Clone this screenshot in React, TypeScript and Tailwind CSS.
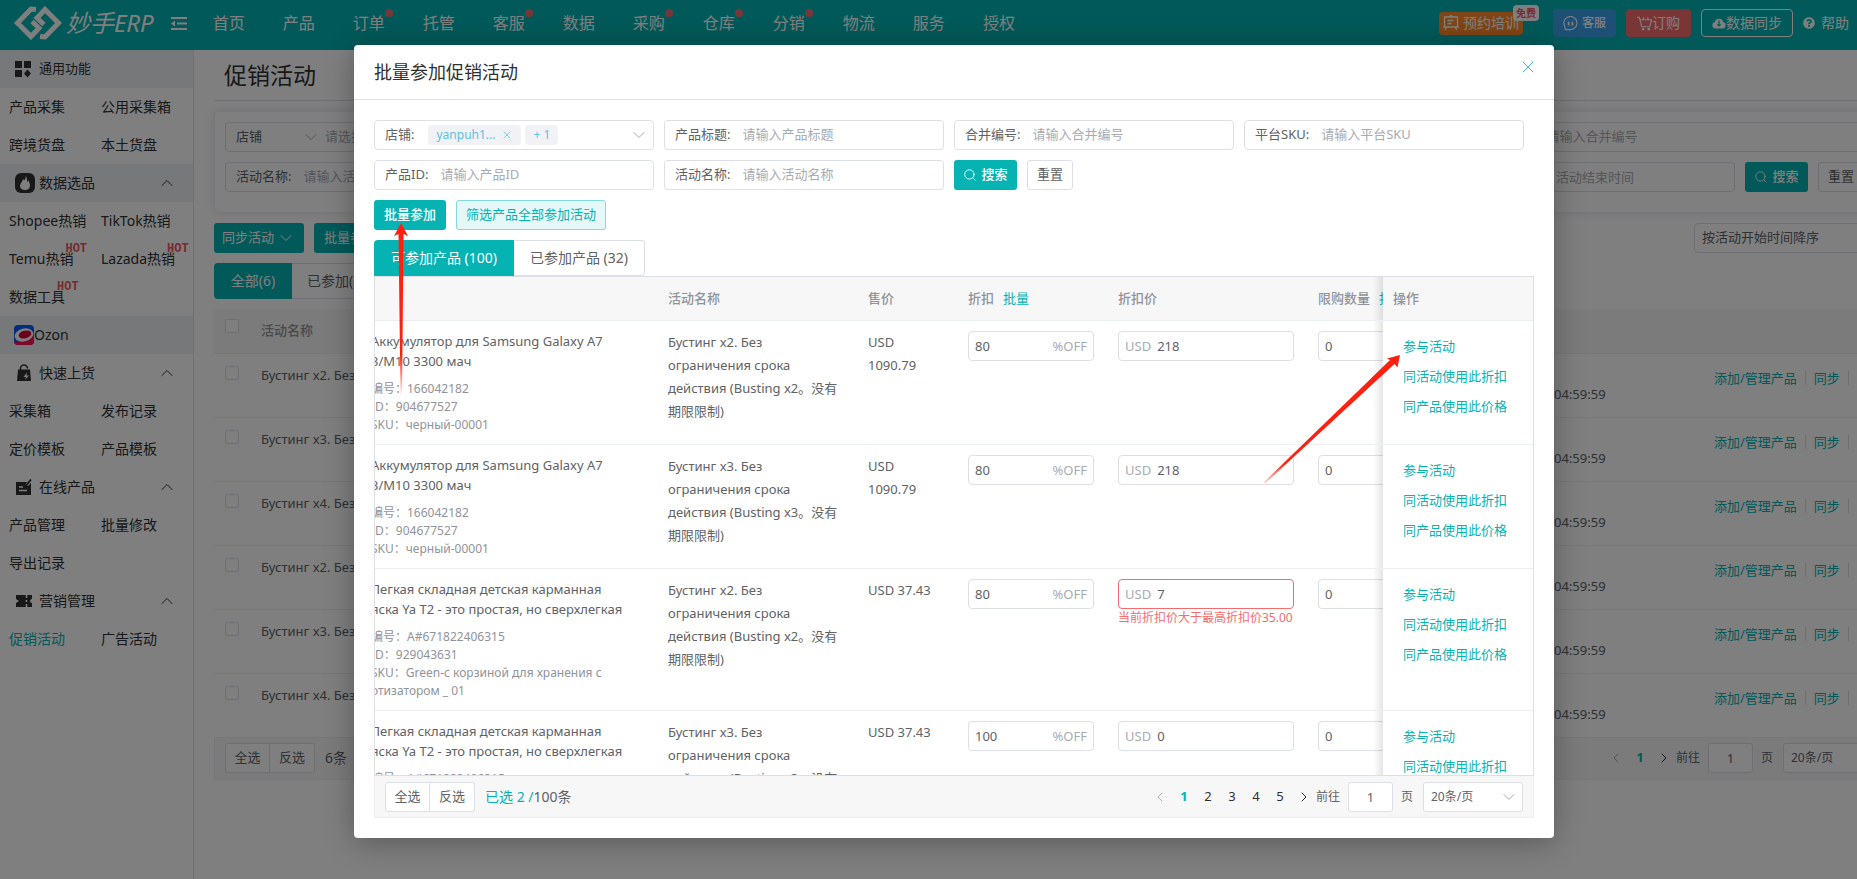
import { useId } from 'react';
import type { ReactNode } from 'react';
import { ChevronDown, ChevronLeft, ChevronRight, ChevronUp, Search, X } from 'lucide-react';
import { FaQuestionCircle } from 'react-icons/fa';

const NAV = [
  { label: '首页' },
  { label: '产品' },
  { label: '订单', dot: true },
  { label: '托管' },
  { label: '客服', dot: true },
  { label: '数据' },
  { label: '采购', dot: true },
  { label: '仓库', dot: true },
  { label: '分销', dot: true },
  { label: '物流' },
  { label: '服务' },
  { label: '授权' },
];

const CAMPAIGNS = ['x2', 'x3', 'x4', 'x2', 'x3', 'x4'];

const PHONE = ['Аккумулятор для Samsung Galaxy A7', '3/M10 3300 мач'];
const STROLLER = ['Легкая складная детская карманная', 'яска Ya T2 - это простая, но сверхлегкая'];

const PRODUCTS = [
  {
    title: PHONE,
    meta: ['编号：166042182', 'ID：904677527', 'SKU：черный-00001'],
    boost: 'x2',
    price: 'USD 1090.79',
    off: '80',
    final: '218',
  },
  {
    title: PHONE,
    meta: ['编号：166042182', 'ID：904677527', 'SKU：черный-00001'],
    boost: 'x3',
    price: 'USD 1090.79',
    off: '80',
    final: '218',
  },
  {
    title: STROLLER,
    meta: ['编号：A#671822406315', 'ID：929043631', 'SKU：Green-с корзиной для хранения с', 'отизатором _ 01'],
    boost: 'x2',
    price: 'USD 37.43',
    off: '80',
    final: '7',
    error: '当前折扣价大于最高折扣价35.00',
  },
  {
    title: STROLLER,
    meta: ['编号：A#671822406315', 'ID：929043631', 'SKU：Green-с корзиной для хранения с', 'отизатором _ 01'],
    boost: 'x3',
    price: 'USD 37.43',
    off: '100',
    final: '0',
  },
];

function Logo() {
  return (
    <svg viewBox="0 0 48 34" className="h-[34px] w-12" fill="none" stroke="white" strokeWidth="5">
      <path d="M22 3.5 L17 3 L3.5 17 L17 30.5 L25 22 L18 15.5" />
      <path d="M26 30.5 L31 31 L44.500 17 L31 3.500 L23 12 L30 18.500" />
    </svg>
  );
}

function MenuIcon() {
  return (
    <svg viewBox="0 0 16 13" className="h-[13px] w-4" fill="white">
      <path d="M0 0h16v2H0zM6 5.500h10v2H6zM0 11h16v2H0zM0 6.500l4-3v6z" />
    </svg>
  );
}

function GridIcon() {
  return (
    <svg viewBox="0 0 18 18" className="size-[18px]" fill="#303133">
      <path d="M0 1h7v7H0zM9 1h7v7H9zM0 10h7v7H0zM12.500 9.500l3.500 4-3.500 4-3.500-4z" />
    </svg>
  );
}

function FireIcon() {
  return (
    <svg viewBox="0 0 20 20" className="size-5">
      <rect width="20" height="20" rx="6" fill="#303133" />
      <path d="M10.500 3c.5 2-.5 3.500-1.500 4.500-.3-.8-.6-1.200-1-1.500 0 2-3 4-3 7 0 2.500 2.200 4 5 4s5-1.500 5-4.500c0-2.500-1.200-4-2-5.500 0 1-.4 1.600-1 2C12.300 6.500 12 4.500 10.500 3z" fill="white" />
    </svg>
  );
}

function OzonIcon() {
  return (
    <svg viewBox="0 0 20 20" className="size-5">
      <defs>
        <clipPath id="ozon-clip">
          <rect width="20" height="20" rx="4" />
        </clipPath>
      </defs>
      <g clipPath="url(#ozon-clip)">
        <rect width="20" height="20" fill="#005bff" />
        <path d="M0 20 L0 17 Q12 17 20 8 V20z" fill="#f91155" />
        <ellipse cx="10" cy="10" rx="9.500" ry="6.500" fill="white" transform="rotate(-14 10 10)" />
        <ellipse cx="11" cy="9.500" rx="6.500" ry="3.800" fill="#d6003f" transform="rotate(-14 11 9.500)" />
      </g>
    </svg>
  );
}

function BagIcon() {
  return (
    <svg viewBox="0 0 18 18" className="size-[18px]">
      <path d="M5.500 6V4.500a3.500 3.500 0 0 1 7 0" fill="none" stroke="#303133" strokeWidth="1.500" />
      <path d="M3 5.500h12l1 11.500H2z" fill="#303133" />
      <path d="M12 8.500l-3.500 4.500h2.500l-1 3 4-4.500h-2.500z" fill="white" />
    </svg>
  );
}

function EditIcon() {
  return (
    <svg viewBox="0 0 18 18" className="size-[18px]">
      <path d="M1 4h11l-2 4h3l3-3v12H1z" fill="#303133" />
      <path d="M4 9h4M4 12.500h8" stroke="white" strokeWidth="1.500" />
      <path d="M10.500 8.500l5.500-7" stroke="#303133" strokeWidth="2" />
    </svg>
  );
}

function TicketIcon() {
  return (
    <svg viewBox="0 0 18 18" className="size-[18px]">
      <path d="M1 3h16v4a2 2 0 0 0 0 4v4H1v-4l3-2-3-2z" fill="#303133" />
      <path d="M11.500 3v3M11.500 8v2M11.500 12v3" stroke="white" strokeWidth="1.500" />
    </svg>
  );
}

function TrainingIcon() {
  return (
    <svg viewBox="0 0 16 16" className="size-4" fill="none" stroke="white" strokeWidth="1.300">
      <path d="M0 12h16M1.500 12v-10h13v10M6 2l2-1.500L10 2M4.500 5.500h6M4.500 8.500h4M4 12L2 15M12 12l2 3" />
    </svg>
  );
}

function HeadsetIcon() {
  return (
    <svg viewBox="0 0 16 16" className="size-[15px]" fill="none" stroke="white" strokeWidth="1.200">
      <path d="M2.500 14.500h5.500a7 7 0 1 0-6-3.200z" />
      <path d="M6 6v4M10 6v4" strokeWidth="1.800" />
    </svg>
  );
}

function CartIcon() {
  return (
    <svg viewBox="0 0 16 16" className="size-[15px]" fill="none" stroke="white" strokeWidth="1.200">
      <path d="M0 1.500h2.500L5 11.500h8.500L15.500 4H3.200M6 4l1.500-2.500M12.500 4L11 1.500" />
      <circle cx="6.500" cy="14" r="0.800" />
      <circle cx="12.500" cy="14" r="0.800" />
    </svg>
  );
}

function CloudIcon() {
  return (
    <svg viewBox="0 0 14 12" className="h-3 w-[14px]">
      <path d="M3.500 11.500a3.300 3.300 0 0 1-.6-6.500 4.200 4.200 0 0 1 8.200 0 3.300 3.300 0 0 1-.6 6.500z" fill="white" />
      <path d="M7 3.500v5.500M5.300 7.300L7 9l1.700-1.700" fill="none" stroke="#05b3b3" strokeWidth="1.200" />
    </svg>
  );
}

function SideGroup({ icon, label, shaded, fold = true }: { icon: ReactNode; label: string; shaded?: boolean; fold?: boolean }) {
  return (
    <div className={`flex h-[38px] items-center pr-4 pl-[15px] ${shaded ? 'bg-[#eff1f5]' : ''}`}>
      <span className="flex w-6 items-center">{icon}</span>
      <span className={`flex-1 ${fold ? 'text-sm' : 'text-[13px]'}`}>{label}</span>
      {fold && <ChevronUp className="size-5" strokeWidth={1.2} />}
    </div>
  );
}

function SideRow({ items, active }: { items: [string, boolean?][]; active?: boolean }) {
  return (
    <div className="grid h-[38px] grid-cols-2 items-center pl-[9px]">
      {items.map(([label, hot], i) => (
        <a key={label} href="#" className={`text-sm ${active && i === 0 ? 'text-[#05b3b3]' : ''}`}>
          <span className="relative">
            {label}
            {hot && <span className="absolute -top-1.5 -right-6 w-8 font-['Liberation_Mono'] text-xs leading-3 font-bold text-[#f5565c]">HOT</span>}
          </span>
        </a>
      ))}
    </div>
  );
}

function Sidebar() {
  return (
    <aside className="w-[194px] shrink-0 border-r border-[#dcdfe6] text-[#303133]">
      <SideGroup icon={<GridIcon />} label="通用功能" shaded fold={false} />
      <SideRow items={[['产品采集'], ['公用采集箱']]} />
      <SideRow items={[['跨境货盘'], ['本土货盘']]} />
      <SideGroup icon={<FireIcon />} label="数据选品" shaded />
      <SideRow items={[['Shopee热销'], ['TikTok热销']]} />
      <SideRow items={[['Temu热销', true], ['Lazada热销', true]]} />
      <SideRow items={[['数据工具', true]]} />
      <div className="flex h-[38px] items-center bg-[#eff1f5] pl-[14px] text-sm">
        <OzonIcon />
        Ozon
      </div>
      <SideGroup icon={<BagIcon />} label="快速上货" />
      <SideRow items={[['采集箱'], ['发布记录']]} />
      <SideRow items={[['定价模板'], ['产品模板']]} />
      <SideGroup icon={<EditIcon />} label="在线产品" />
      <SideRow items={[['产品管理'], ['批量修改']]} />
      <SideRow items={[['导出记录']]} />
      <SideGroup icon={<TicketIcon />} label="营销管理" />
      <SideRow items={[['促销活动'], ['广告活动']]} active />
    </aside>
  );
}

function TopBar() {
  return (
    <header className="flex h-[50px] items-center bg-[#05b3b3] pr-[59px] pb-1 pl-[14px] text-white">
      <Logo />
      <span className="ml-1 text-2xl italic">妙手ERP</span>
      <button className="ml-[17px]" aria-label="收起菜单">
        <MenuIcon />
      </button>
      <nav className="ml-[26px] flex gap-[38px] text-base">
        {NAV.map((item) => (
          <a key={item.label} href="#" className="relative">
            {item.label}
            {item.dot && <span className="absolute -top-0.5 -right-2 size-2 rounded-full bg-[#f56c6c]" />}
          </a>
        ))}
      </nav>
      <div className="ml-auto flex items-center text-sm">
        <button className="relative mr-[30px] flex h-[23px] items-center gap-1 rounded-sm bg-[#ff8a2b] px-1">
          <TrainingIcon />
          预约培训
          <span className="absolute -top-[7px] -right-4 rounded bg-white px-[3px] text-[10px] leading-4 font-bold text-[#f5565c]">免费</span>
        </button>
        <button className="mr-2.5 flex h-7 items-center gap-1 rounded bg-[#3ba0e9] px-2.5 text-xs font-medium">
          <HeadsetIcon />
          客服
        </button>
        <button className="mr-2.5 flex h-7 items-center rounded bg-[#f56c6c] px-[11px]">
          <CartIcon />
          订购
        </button>
        <button className="mr-2.5 flex h-7 items-center rounded border border-white px-2.5">
          <CloudIcon />
          数据同步
        </button>
        <a href="#" className="flex items-center gap-1.5">
          <FaQuestionCircle className="size-3" />
          帮助
        </a>
      </div>
    </header>
  );
}

function Field({ label, placeholder, className = '' }: { label: string; placeholder: string; className?: string }) {
  const id = useId();
  return (
    <div className={`flex h-[30px] items-center rounded border border-[#dcdfe6] px-2.5 text-[13px] ${className}`}>
      <label htmlFor={id} className="shrink-0">
        {label}:
      </label>
      <input id={id} placeholder={placeholder} className="ml-3 w-full min-w-0 outline-none placeholder:text-[#a8abb2]" />
    </div>
  );
}

function SearchButtons() {
  return (
    <>
      <button className="flex h-[30px] w-[63px] items-center justify-center gap-1 rounded-[3px] bg-[#05b3b3] text-[13px] font-medium text-white">
        <Search className="size-[14px]" strokeWidth={1.5} />
        搜索
      </button>
      <button className="h-[30px] w-[46px] rounded-[3px] border border-[#dcdfe6] text-[13px]">重置</button>
    </>
  );
}

function Pager({ pages, total }: { pages: number[]; total: ReactNode }) {
  return (
    <div className="flex h-[42px] items-center border border-t-0 border-[#ebeef5] bg-[#f7f7f8] px-2.5 text-[13px]">
      <button className="h-[30px] w-[45px] rounded-l-[3px] border border-[#dcdfe6] bg-white">全选</button>
      <button className="h-[30px] w-[45px] rounded-r-[3px] border border-l-0 border-[#dcdfe6] bg-white">反选</button>
      <span className="ml-2.5 text-sm">{total}</span>
      <div className="ml-auto flex items-center text-[#303133]">
        <button className="flex w-6 justify-center" aria-label="上一页">
          <ChevronLeft className="size-4 text-[#a8abb2]" strokeWidth={1.5} />
        </button>
        {pages.map((n) => (
          <button key={n} className={`w-6 text-center ${n === 1 ? 'font-bold text-[#05b3b3]' : ''}`}>
            {n}
          </button>
        ))}
        <button className="flex w-6 justify-center" aria-label="下一页">
          <ChevronRight className="size-4" strokeWidth={1.5} />
        </button>
        <label className="flex items-center gap-2 text-xs text-[#606266]">
          前往
          <input defaultValue="1" className="h-[30px] w-[45px] rounded-[3px] border border-[#dcdfe6] bg-white text-center text-[13px]" />
          页
        </label>
        <span className="relative ml-2.5">
          <select aria-label="每页条数" className="h-[30px] w-[100px] appearance-none rounded-[3px] border border-[#dcdfe6] bg-white pl-[7px] text-xs text-[#606266]">
            <option>20条/页</option>
          </select>
          <ChevronDown className="pointer-events-none absolute top-[5px] right-1 size-5 text-[#a8abb2]" strokeWidth={1.2} />
        </span>
      </div>
    </div>
  );
}

function CampaignPage() {
  return (
    <main className="min-w-0 flex-1 pr-[14px] pl-5 text-[13px]">
      <h1 className="h-[51px] border-b border-[#dcdfe6] pl-2.5 text-[23px] leading-[50px] text-[#303133]">促销活动</h1>
      <section className="mt-2.5 space-y-2.5 rounded border border-[#ebeef5] p-2.5 pb-5 shadow-[0_0_12px_rgba(0,0,0,0.1)]">
        <div className="flex justify-between">
          <div className="flex h-[30px] w-[300px] items-center rounded border border-[#dcdfe6] px-2.5">
            <label htmlFor="shop" className="w-[65px]">
              店铺
            </label>
            <ChevronDown className="mr-1 size-5 text-[#a8abb2]" strokeWidth={1.2} />
            <input id="shop" placeholder="请选择" className="min-w-0 flex-1 placeholder:text-[#a8abb2]" />
          </div>
          <Field label="合并编号" placeholder="请输入合并编号" className="w-[415px]" />
        </div>
        <div className="flex gap-2.5">
          <Field label="活动名称" placeholder="请输入活动名称" className="w-[300px]" />
          <input
            aria-label="活动结束时间"
            placeholder="活动结束时间"
            className="ml-auto h-[30px] w-[300px] rounded border border-[#dcdfe6] pl-[120px] placeholder:text-[#a8abb2]"
          />
          <SearchButtons />
          <span className="w-[9px]" />
        </div>
      </section>
      <div className="mt-2.5 flex gap-2.5">
        <button className="flex h-[30px] w-[90px] items-center justify-center gap-0.5 rounded-[3px] bg-[#05b3b3] text-white">
          同步活动
          <ChevronDown className="size-5" strokeWidth={1.2} />
        </button>
        <button className="h-[30px] w-[72px] rounded-[3px] bg-[#05b3b3] text-white">批量参加</button>
        <select aria-label="排序" className="ml-auto h-[30px] w-[200px] appearance-none rounded border border-[#dcdfe6] pl-[7px]">
          <option>按活动开始时间降序</option>
        </select>
      </div>
      <div className="mt-2.5 flex text-sm">
        <button className="h-9 w-[78px] rounded-l bg-[#05b3b3] text-white">全部(6)</button>
        <button className="h-9 w-[100px] rounded-r border border-l-0 border-[#dcdfe6] pl-[15px] text-left">已参加(6)</button>
      </div>
      <table className="mt-2.5 w-full table-fixed">
        <colgroup>
          <col className="w-[37px]" />
          <col />
          <col className="w-40" />
          <col className="w-[190px]" />
        </colgroup>
        <thead className="bg-[#f7f7f8] text-left text-[#909399]">
          <tr className="h-11 border-b border-[#ebeef5]">
            <th className="pt-2.5 pl-[11px] align-top">
              <input type="checkbox" aria-label="全选活动" className="block size-[14px] appearance-none rounded-xs border border-[#dcdfe6] bg-white" />
            </th>
            <th className="pl-2.5 font-medium">活动名称</th>
            <th />
            <th />
          </tr>
        </thead>
        <tbody>
          {CAMPAIGNS.map((boost, i) => (
            <tr key={i} className="h-16 border-b border-[#ebeef5] align-top">
              <td className="pt-3 pl-[11px]">
                <input type="checkbox" aria-label={`Бустинг ${boost}`} className="block size-[14px] appearance-none rounded-xs border border-[#dcdfe6] bg-white" />
              </td>
              <td className="pt-2.5 pl-2.5 leading-[23px]">Бустинг {boost}. Без</td>
              <td className="pt-[30px] pl-2.5 leading-5">04:59:59</td>
              <td className="pt-3.5 pl-2.5 leading-5">
                <span className="flex items-center text-[#05b3b3]">
                  <a href="#">添加/管理产品</a>
                  <span className="mx-2 h-3.5 w-px bg-[#dcdfe6]" />
                  <a href="#">同步</a>
                  <span className="mx-2 h-3.5 w-px bg-[#dcdfe6]" />
                </span>
              </td>
            </tr>
          ))}
        </tbody>
      </table>
      <Pager pages={[1]} total="6条" />
    </main>
  );
}

function ProductTable() {
  const fixed =
    "sticky right-0 before:absolute before:inset-y-0 before:-left-2.5 before:w-2.5 before:bg-linear-to-r before:from-transparent before:to-black/10 before:content-['']";
  return (
    <div className="h-[500px] overflow-hidden border border-[#dcdfe6]">
      <table className="-ml-1 w-[1237px] table-fixed border-separate border-spacing-0">
        <colgroup>
          <col className="w-[287px]" />
          <col className="w-[200px]" />
          <col className="w-[100px]" />
          <col className="w-[150px]" />
          <col className="w-[200px]" />
          <col className="w-[150px]" />
          <col className="w-[150px]" />
        </colgroup>
        <thead>
          <tr className="h-11 text-left text-[#909399] *:border-b *:border-[#ebeef5] *:bg-[#f7f7f8] *:px-2.5 *:font-medium">
            <th />
            <th>活动名称</th>
            <th>售价</th>
            <th>
              折扣
              <button className="ml-[9px] font-normal text-[#05b3b3]">批量</button>
            </th>
            <th>折扣价</th>
            <th className="whitespace-nowrap">
              限购数量
              <button className="ml-[9px] font-normal text-[#05b3b3]">批量</button>
            </th>
            <th className={fixed}>操作</th>
          </tr>
        </thead>
        <tbody>
          {PRODUCTS.map((p, i) => (
            <tr key={i} className="align-top leading-[23px] *:border-b *:border-[#ebeef5] *:py-2.5">
              <td className="leading-5 whitespace-nowrap">
                {p.title.map((line) => (
                  <div key={line}>{line}</div>
                ))}
                <div className="mt-[9px] text-xs leading-[18px] text-[#909399]">
                  {p.meta.map((line) => (
                    <div key={line}>{line}</div>
                  ))}
                </div>
              </td>
              <td className="px-2.5">
                Бустинг {p.boost}. Без ограничения срока действия (Busting {p.boost}。没有期限限制)
              </td>
              <td className="pr-5 pl-2.5">{p.price}</td>
              <td className="pr-[14px] pl-2.5">
                <label className="flex h-[30px] items-center rounded border border-[#dcdfe6] px-1.5 text-[#a8abb2]">
                  <input defaultValue={p.off} className="min-w-0 flex-1 text-[#606266]" />
                  %OFF
                </label>
              </td>
              <td className="pr-[14px] pl-2.5">
                <label className={`flex h-[30px] items-center gap-1.5 rounded border px-1.5 text-[#a8abb2] ${p.error ? 'border-[#f56c6c]' : 'border-[#dcdfe6]'}`}>
                  USD
                  <input defaultValue={p.final} className="min-w-0 flex-1 text-[#606266]" />
                </label>
                {p.error && <p className="text-xs leading-[18px] whitespace-nowrap text-[#f56c6c]">{p.error}</p>}
              </td>
              <td className="px-2.5">
                <input aria-label="限购数量" defaultValue="0" className="h-[30px] w-full rounded border border-[#dcdfe6] px-1.5" />
              </td>
              <td className={`bg-white pl-5 ${fixed}`}>
                <div className="flex flex-col leading-[30px] text-[#05b3b3]">
                  <a href="#">参与活动</a>
                  <a href="#">同活动使用此折扣</a>
                  <a href="#">同产品使用此价格</a>
                </div>
              </td>
            </tr>
          ))}
        </tbody>
      </table>
    </div>
  );
}

// red guide arrows drawn over the dialog
function GuideArrows() {
  return (
    <svg className="pointer-events-none absolute top-0 left-0 h-[460px] w-[1060px]" viewBox="0 0 1060 460">
      <defs>
        <linearGradient id="fade-up" gradientUnits="userSpaceOnUse" x1="0" y1="352" x2="0" y2="310">
          <stop offset="0" stopColor="#ff2010" stopOpacity="0" />
          <stop offset="1" stopColor="#ff2010" />
        </linearGradient>
        <linearGradient id="fade-side" gradientUnits="userSpaceOnUse" x1="906" y1="441" x2="930" y2="418">
          <stop offset="0" stopColor="#ff2010" stopOpacity="0" />
          <stop offset="1" stopColor="#ff2010" />
        </linearGradient>
      </defs>
      <path d="M47 178 L54 191 L49.500 189 L48 352 L46.500 352 L44.500 189 L40 191z" fill="url(#fade-up)" />
      <path d="M1046 310 L1043.500 322.500 L1040.500 319 L911 438.500 L909.500 437.500 L1036 315 L1033 313.500z" fill="url(#fade-side)" />
    </svg>
  );
}

function JoinDialog() {
  return (
    <div role="dialog" aria-label="批量参加促销活动" className="relative w-[1200px] rounded bg-white text-[13px] shadow-[0_4px_30px_rgba(0,0,0,0.3)]">
      <div className="flex h-[55px] items-center justify-between border-b border-[#dcdfe6] pr-4 pl-5">
        <h2 className="text-lg text-[#303133]">批量参加促销活动</h2>
        <button aria-label="关闭" className="-mt-2.5">
          <X className="size-5 text-[#45b8dd]" strokeWidth={1.2} />
        </button>
      </div>
      <div className="p-5">
        <div className="mr-2.5 grid grid-cols-4 gap-2.5">
          <div className="flex h-[30px] items-center rounded border border-[#dcdfe6] px-2.5">
            <span>店铺:</span>
            <span className="ml-3.5 flex h-5 items-center gap-1.5 rounded bg-[#f0f2f5] px-2 text-xs text-[#5cc3e0]">
              yanpuh1...
              <X className="size-3" strokeWidth={1.5} />
            </span>
            <span className="ml-1 flex h-5 items-center rounded bg-[#f0f2f5] px-2 text-xs text-[#5cc3e0]">+ 1</span>
            <button aria-label="展开店铺" className="-mr-1.5 ml-auto">
              <ChevronDown className="size-5 text-[#a8abb2]" strokeWidth={1.2} />
            </button>
          </div>
          <Field label="产品标题" placeholder="请输入产品标题" />
          <Field label="合并编号" placeholder="请输入合并编号" />
          <Field label="平台SKU" placeholder="请输入平台SKU" />
          <Field label="产品ID" placeholder="请输入产品ID" />
          <Field label="活动名称" placeholder="请输入活动名称" />
          <div className="flex gap-2.5">
            <SearchButtons />
          </div>
        </div>
        <div className="mt-2.5 flex gap-2.5">
          <button className="h-[30px] w-[72px] rounded-[3px] bg-[#05b3b3] font-medium text-white">批量参加</button>
          <button className="h-[30px] w-[150px] rounded-[3px] border border-[#82d9d9] bg-[#e6f7f7] text-[#05b3b3]">筛选产品全部参加活动</button>
        </div>
        <div className="mt-2.5 flex text-sm">
          <button className="h-9 w-[140px] rounded-tl bg-[#05b3b3] text-white">可参加产品 (100)</button>
          <button className="h-9 w-[131px] rounded-r border border-l-0 border-[#dcdfe6]">已参加产品 (32)</button>
        </div>
        <ProductTable />
        <Pager
          pages={[1, 2, 3, 4, 5]}
          total={
            <>
              <span className="text-[#05b3b3]">已选 2 /</span>100条
            </>
          }
        />
      </div>
      <GuideArrows />
    </div>
  );
}

export default function App() {
  return (
    <div className="overflow-hidden bg-white font-['Noto_Sans','Noto_Sans_CJK_SC',sans-serif] text-[#606266]">
      <div className="relative flex min-h-screen min-w-[1908px] flex-col">
        <TopBar />
        <div className="flex flex-1">
          <Sidebar />
          <CampaignPage />
        </div>
        <div className="absolute inset-0 flex items-start justify-center bg-black/50 pt-[45px]">
          <JoinDialog />
        </div>
      </div>
    </div>
  );
}
